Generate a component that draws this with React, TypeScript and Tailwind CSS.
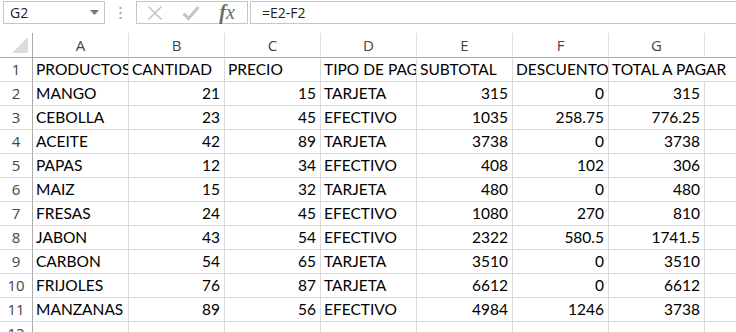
import React from "react";

const cols = ["A", "B", "C", "D", "E", "F", "G"];
const rows: (string | number)[][] = [
  ["PRODUCTOS", "CANTIDAD", "PRECIO", "TIPO DE PAGO", "SUBTOTAL", "DESCUENTO", "TOTAL A PAGAR"],
  ["MANGO", 21, 15, "TARJETA", 315, 0, 315],
  ["CEBOLLA", 23, 45, "EFECTIVO", 1035, 258.75, 776.25],
  ["ACEITE", 42, 89, "TARJETA", 3738, 0, 3738],
  ["PAPAS", 12, 34, "EFECTIVO", 408, 102, 306],
  ["MAIZ", 15, 32, "TARJETA", 480, 0, 480],
  ["FRESAS", 24, 45, "EFECTIVO", 1080, 270, 810],
  ["JABON", 43, 54, "EFECTIVO", 2322, 580.5, 1741.5],
  ["CARBON", 54, 65, "TARJETA", 3510, 0, 3510],
  ["FRIJOLES", 76, 87, "TARJETA", 6612, 0, 6612],
  ["MANZANAS", 89, 56, "EFECTIVO", 4984, 1246, 3738],
];

const cellFont = { fontFamily: "Lato, 'Liberation Sans', sans-serif" };
const uiFont = { fontFamily: "'Open Sans', 'Noto Sans', sans-serif" };

export default function App() {
  return (
    <div className="w-[736px] h-[332px] overflow-hidden bg-white relative">
      {/* Formula bar */}
      <div className="flex items-start h-[33px] pt-[1px]">
        <div className="ml-[3px] w-[102px] h-[23px] border border-[#c6c6c6] flex items-center justify-between pl-[6px] pr-[5px] text-[14px] text-[#222]" style={uiFont}>
          <span>G2</span>
          <svg width="9" height="6" viewBox="0 0 9 6"><path d="M0 0 L9 0 L4.5 5 Z" fill="#777" /></svg>
        </div>
        <div className="w-[31px] h-[23px] flex items-center justify-center">
          <svg width="3" height="14" viewBox="0 0 3 14">
            <rect x="0.5" y="1" width="2" height="2" fill="#a6a6a6" />
            <rect x="0.5" y="6" width="2" height="2" fill="#a6a6a6" />
            <rect x="0.5" y="11" width="2" height="2" fill="#a6a6a6" />
          </svg>
        </div>
        <div className="w-[112px] h-[23px] border border-[#c6c6c6] flex items-center">
          <div className="w-[36px] flex justify-center">
            <svg width="16" height="16" viewBox="0 0 16 16"><path d="M1.5 1.5 L14.5 14.5 M14.5 1.5 L1.5 14.5" stroke="#c4c4c4" strokeWidth="1.6" /></svg>
          </div>
          <div className="w-[36px] flex justify-center">
            <svg width="18" height="16" viewBox="0 0 18 16"><path d="M1.5 8.5 L6.5 13.5 L16.5 2" stroke="#c4c4c4" strokeWidth="3" fill="none" /></svg>
          </div>
          <div className="w-[36px] flex justify-center">
            <span className="italic text-[20px] leading-none text-[#6b6b6b] -mt-[2px]" style={{ fontFamily: "'Liberation Serif', serif" }}>
              <span className="font-bold">f</span>x
            </span>
          </div>
        </div>
        <div className="ml-[2px] flex-1 h-[23px] border border-r-0 border-[#c6c6c6] flex items-center pl-[11px] text-[14px] text-[#222]" style={uiFont}>
          =E2-F2
        </div>
      </div>

      {/* Grid */}
      <div className="grid grid-cols-[33px_repeat(7,96px)_1fr]">
        {/* header row */}
        <div className="h-[25px] border-r border-b border-[#ababab] relative">
          <svg className="absolute left-[12px] top-[4px]" width="16" height="16" viewBox="0 0 16 16"><path d="M16 0 L16 16 L0 16 Z" fill="#dcdcdc" /></svg>
        </div>
        {cols.map((c) => (
          <div key={c} className="h-[25px] border-r border-r-[#e1e1e1] border-b border-b-[#ababab] flex items-center justify-center text-[15px] text-[#444]" style={uiFont}>
            {c}
          </div>
        ))}
        <div className="h-[25px] border-b border-[#ababab]" />

        {[...rows, null].map((r, i) => (
          <React.Fragment key={i}>
            <div className="h-[24px] border-r border-r-[#ababab] border-b border-b-[#dadada] flex items-center justify-center text-[15px] text-[#444]" style={uiFont}>
              {i + 1}
            </div>
            {cols.map((c, j) => {
              const v = r ? r[j] : "";
              const num = typeof v === "number";
              const overflowLast = i === 0 && j === 6;
              return (
                <div
                  key={c}
                  className={
                    overflowLast
                      ? "h-[24px] border-b border-[#dadada] whitespace-nowrap flex items-center text-[15.5px] text-black pl-[3px] relative z-10 overflow-visible"
                      : `h-[24px] border-r border-b border-[#dadada] overflow-hidden whitespace-nowrap flex items-center text-[15.5px] text-black ${num ? "justify-end pr-[4px]" : "pl-[3px]"}`
                  }
                  style={overflowLast ? { ...cellFont, width: 97 } : cellFont}
                >
                  {String(v)}
                </div>
              );
            })}
            <div className="h-[24px] border-b border-[#dadada]" />
          </React.Fragment>
        ))}
      </div>
    </div>
  );
}
